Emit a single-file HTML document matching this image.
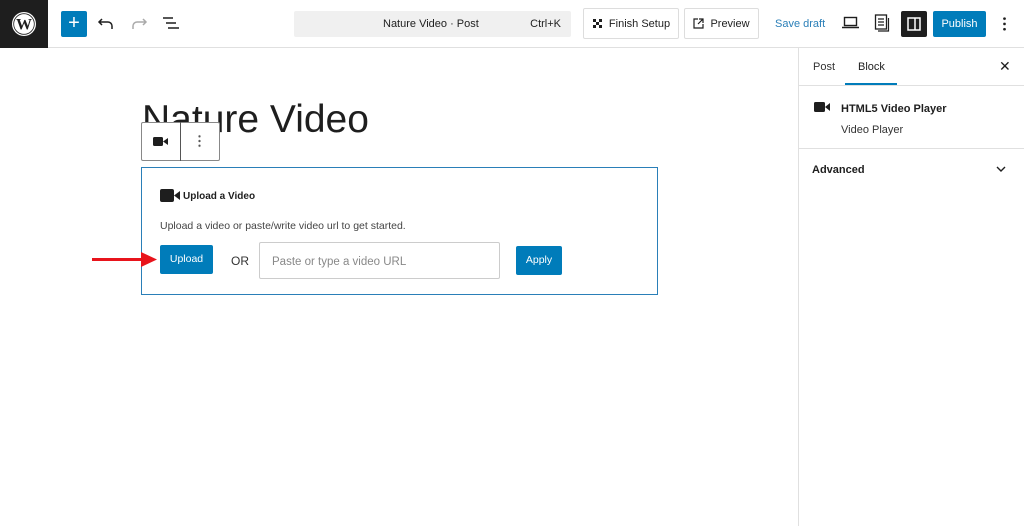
<!DOCTYPE html>
<html><head><meta charset="utf-8"><style>
*{box-sizing:border-box;margin:0;padding:0}
body{width:1024px;height:526px;overflow:hidden;background:#fff;font-family:"Liberation Sans",sans-serif;color:#1e1e1e;position:relative}
.abs{position:absolute}
.btn{position:absolute;border:1px solid #ddd;border-radius:2px;font-size:11px;display:flex;align-items:center;justify-content:center;gap:6px;color:#1e1e1e}
</style></head><body>
<div class="abs" style="left:0;top:0;width:1024px;height:48px;border-bottom:1px solid #e0e0e0"></div>
<div class="abs" style="left:0;top:0;width:48px;height:48px;background:#1e1e1e;display:flex;align-items:center;justify-content:center">
<svg width="26" height="26" viewBox="0 0 26 26"><circle cx="13" cy="13" r="12" fill="#fff"/><circle cx="13" cy="13" r="10.3" fill="none" stroke="#1e1e1e" stroke-width="0.8"/><text x="13" y="18.5" text-anchor="middle" fill="#1e1e1e" font-family="Liberation Serif" font-weight="bold" font-size="16">W</text></svg></div>
<div class="abs" style="left:61px;top:11px;width:26px;height:26px;background:#007cba;border-radius:2px;color:#fff;font-size:20px;line-height:25px;text-align:center">+</div>
<svg class="abs" style="left:97px;top:16px" width="18" height="16" viewBox="0 0 18 16"><path d="M5 3 L2 6 L5 9 M2 6 H11 a4 4 0 0 1 4 4 V13" fill="none" stroke="#1e1e1e" stroke-width="1.5"/></svg>
<svg class="abs" style="left:130px;top:16px" width="18" height="16" viewBox="0 0 18 16"><path d="M13 3 L16 6 L13 9 M16 6 H7 a4 4 0 0 0 -4 4 V13" fill="none" stroke="#aaa" stroke-width="1.5"/></svg>
<svg class="abs" style="left:162px;top:16px" width="18" height="14" viewBox="0 0 18 14"><path d="M1 2H11M4 7H14M6 12H17" stroke="#1e1e1e" stroke-width="1.5"/></svg>
<div class="abs" style="left:294px;top:11px;width:277px;height:26px;background:#f0f0f0;border-radius:2px;font-size:11px"><span class="abs" style="left:89px;top:7px">Nature Video · Post</span><span class="abs" style="right:10px;top:7px">Ctrl+K</span></div>
<div class="btn" style="left:583px;top:8px;width:96px;height:31px"><svg width="11" height="11" viewBox="0 0 11 11"><path d="M1 1h3v3h3V1h3v3H7v3h3v3H7V7H4v3H1V7h3V4H1z" fill="#1e1e1e"/></svg>Finish Setup</div>
<div class="btn" style="left:684px;top:8px;width:75px;height:31px"><svg width="11" height="11" viewBox="0 0 11 11"><path d="M5 1H1v9h9V6M6 1h4v4M10 1L5 6" fill="none" stroke="#1e1e1e" stroke-width="1.2"/></svg>Preview</div>
<div class="abs" style="left:775px;top:18px;font-size:11px;color:#2a7fb8">Save draft</div>
<svg class="abs" style="left:842px;top:16px" width="17" height="13" viewBox="0 0 17 13"><rect x="2.5" y="1.5" width="12" height="8" fill="none" stroke="#1e1e1e" stroke-width="1.4"/><path d="M0 11.5H17" stroke="#1e1e1e" stroke-width="1.4"/></svg>
<svg class="abs" style="left:874px;top:14px" width="16" height="18" viewBox="0 0 16 18"><rect x="1.5" y="1" width="11" height="14" fill="#fff" stroke="#1e1e1e" stroke-width="1.3"/><path d="M4 5H10M4 8H10M4 11H10M14.5 4V17H4" fill="none" stroke="#1e1e1e" stroke-width="1.2"/></svg>
<div class="abs" style="left:901px;top:11px;width:26px;height:26px;background:#1e1e1e;border-radius:2px"><svg width="26" height="26" viewBox="0 0 26 26"><rect x="7" y="7" width="12" height="12" fill="none" stroke="#fff" stroke-width="1.5"/><path d="M14 7V19" stroke="#fff" stroke-width="1.5"/></svg></div>
<div class="abs" style="left:933px;top:11px;width:53px;height:26px;background:#007cba;border-radius:2px;color:#fff;font-size:11px;line-height:26px;text-align:center">Publish</div>
<div class="abs" style="left:1003px;top:16px;width:3px;height:16px;background:radial-gradient(circle,#1e1e1e 1.2px,transparent 1.5px) 0 0/3px 5.3px"></div>
<div class="abs" style="left:798px;top:48px;width:1px;height:478px;background:#e0e0e0"></div>
<div class="abs" style="left:813px;top:61px;font-size:11px;color:#333">Post</div>
<div class="abs" style="left:858px;top:61px;font-size:11px;color:#1e1e1e">Block</div>
<div class="abs" style="left:845px;top:83px;width:52px;height:2px;background:#007cba"></div>
<div class="abs" style="left:999px;top:58px;font-size:14px">✕</div>
<div class="abs" style="left:799px;top:85px;width:225px;height:1px;background:#e0e0e0"></div>
<svg class="abs" style="left:814px;top:102px" width="16" height="10" viewBox="0 0 16 10"><rect x="0" y="0" width="11" height="10" rx="1.5" fill="#1e1e1e"/><path d="M11 5L16 1V9Z" fill="#1e1e1e"/></svg>
<div class="abs" style="left:841px;top:103px;font-size:11px;font-weight:bold">HTML5 Video Player</div>
<div class="abs" style="left:841px;top:124px;font-size:11px;color:#333">Video Player</div>
<div class="abs" style="left:799px;top:148px;width:225px;height:1px;background:#e0e0e0"></div>
<div class="abs" style="left:812px;top:164px;font-size:11px;font-weight:bold">Advanced</div>
<svg class="abs" style="left:996px;top:166px" width="10" height="6" viewBox="0 0 10 6"><path d="M1 1L5 5L9 1" fill="none" stroke="#1e1e1e" stroke-width="1.4"/></svg>
<div class="abs" style="left:142px;top:98px;font-size:39px;color:#1e1e1e">Nature Video</div>
<div class="abs" style="left:141px;top:122px;width:79px;height:39px;background:#fff;border:1px solid #888;border-radius:2px"></div>
<div class="abs" style="left:180px;top:122px;width:1px;height:39px;background:#555"></div>
<svg class="abs" style="left:153px;top:137px" width="15" height="9" viewBox="0 0 15 9"><rect width="10" height="9" rx="1.5" fill="#1e1e1e"/><path d="M10 4.5L15 1V8Z" fill="#1e1e1e"/></svg>
<div class="abs" style="left:198px;top:134px;width:3px;height:14px;background:radial-gradient(circle,#555 1px,transparent 1.3px) 0 0/3px 4.7px"></div>
<div class="abs" style="left:141px;top:167px;width:517px;height:128px;border:1.5px solid #2a7fb8"></div>
<svg class="abs" style="left:160px;top:189px" width="20" height="13" viewBox="0 0 20 13"><rect width="14" height="13" rx="2" fill="#1e1e1e"/><path d="M14 6.5L20 2V11Z" fill="#1e1e1e"/></svg>
<div class="abs" style="left:183px;top:191px;font-size:10px;font-weight:bold">Upload a Video</div>
<div class="abs" style="left:160px;top:220px;font-size:10.5px;color:#444">Upload a video or paste/write video url to get started.</div>
<div class="abs" style="left:160px;top:245px;width:53px;height:29px;background:#007cba;border-radius:2px;color:#fff;font-size:10.5px;line-height:29px;text-align:center">Upload</div>
<div class="abs" style="left:231px;top:254px;font-size:12px;color:#333">OR</div>
<div class="abs" style="left:259px;top:242px;width:241px;height:37px;border:1px solid #ccc;border-radius:2px;font-size:11.5px;color:#888;padding:13px 0 0 12px">Paste or type a video URL</div>
<div class="abs" style="left:516px;top:246px;width:46px;height:29px;background:#007cba;border-radius:2px;color:#fff;font-size:10.5px;line-height:29px;text-align:center">Apply</div>
<div class="abs" style="left:92px;top:258px;width:52px;height:3px;background:#e8141c"></div>
<svg class="abs" style="left:141px;top:252px" width="16" height="15" viewBox="0 0 16 15"><path d="M0 0L16 7.5L0 15Z" fill="#e8141c"/></svg>
</body></html>
